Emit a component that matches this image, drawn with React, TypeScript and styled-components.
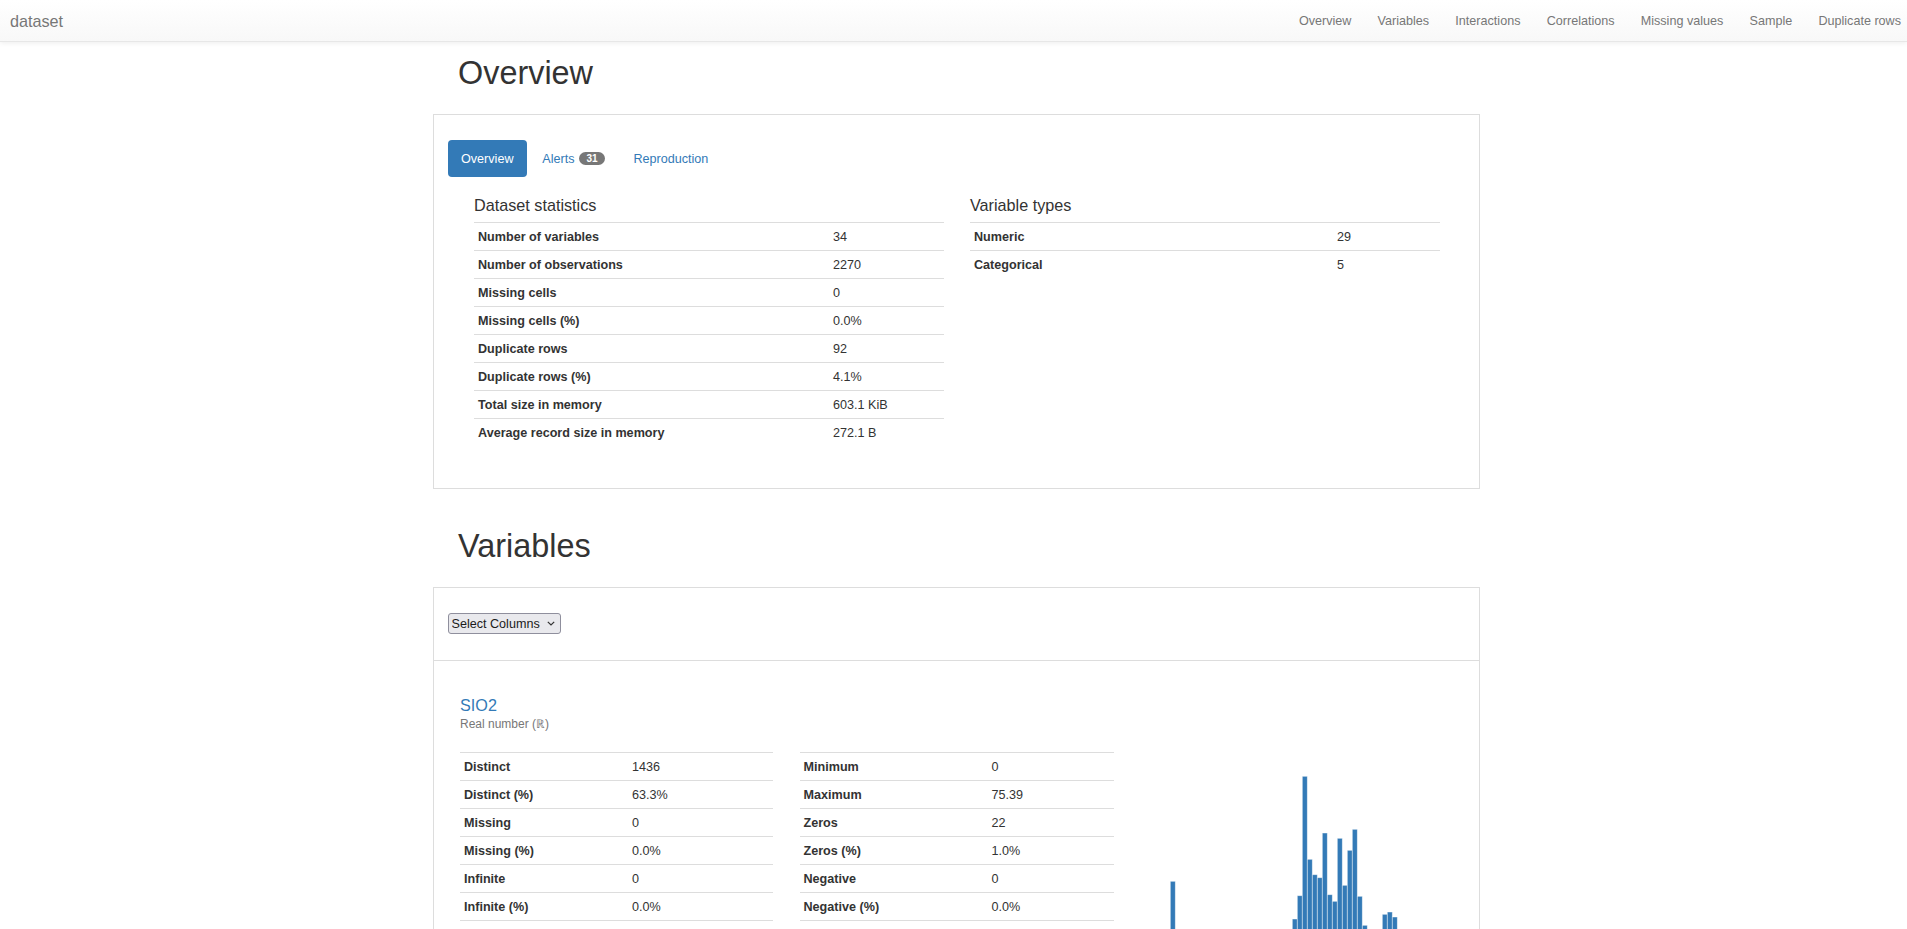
import React from "react";
import styled, { createGlobalStyle } from "styled-components";

const GlobalStyle = createGlobalStyle`
  html, body { margin: 0; padding: 0; background: #fff; }
  body {
    font-family: "Liberation Sans", Arial, Helvetica, sans-serif;
    font-size: 12.6px;
    line-height: 18px;
    color: #333;
  }
  * { box-sizing: border-box; }
`;

const Navbar = styled.nav`
  height: 42px;
  display: flex;
  align-items: center;
  justify-content: space-between;
  padding: 0 6px 0 10px;
  background: linear-gradient(to bottom, #ffffff 0, #f8f8f8 100%);
  border-bottom: 1px solid #e7e7e7;
  box-shadow: inset 0 1px 0 rgba(255, 255, 255, 0.15), 0 1px 5px rgba(0, 0, 0, 0.075);
`;

const Brand = styled.a`
  font-size: 16.2px;
  color: #777;
  text-decoration: none;
`;

const NavLinks = styled.ul`
  display: flex;
  gap: 26.2px;
  list-style: none;
  margin: 0;
  padding: 0;
`;

const NavLink = styled.a`
  color: #777;
  font-size: 12.6px;
  text-decoration: none;
`;

const Main = styled.main`
  width: 1053px;
  margin: 0 auto;
  padding: 14px 0 0 6px;
  display: flex;
  flex-direction: column;
  gap: 39.5px;
`;

const Section = styled.section`
  display: flex;
  flex-direction: column;
`;

const SectionTitle = styled.h1`
  font-size: 32.4px;
  line-height: 1.1;
  font-weight: normal;
  color: #333;
  margin: 0 0 22.4px;
  padding-left: 25px;
`;

const Panel = styled.div`
  border: 1px solid #ddd;
  background: #fff;
`;

const PanelBody = styled.div`
  padding: 25px 13.5px 42.5px;
`;

const Tabs = styled.ul`
  display: flex;
  align-items: center;
  gap: 1.8px;
  list-style: none;
  margin: 0;
  padding: 0;
`;

const Tab = styled.a<{ $active?: boolean }>`
  display: flex;
  align-items: center;
  gap: 5px;
  padding: 9.5px 13.5px 9px;
  line-height: 18px;
  border-radius: 4px;
  font-size: 12.6px;
  text-decoration: none;
  color: ${(p) => (p.$active ? "#fff" : "#337ab7")};
  background: ${(p) => (p.$active ? "#337ab7" : "transparent")};
`;

const Badge = styled.span`
  display: inline-block;
  padding: 1.5px 7px;
  font-size: 10px;
  line-height: 10px;
  font-weight: bold;
  color: #fff;
  background: #777;
  border-radius: 10px;
`;

const TabContent = styled.div`
  display: grid;
  grid-template-columns: 470px 470px;
  column-gap: 26px;
  padding: 19.5px 26.5px 0;
`;

const SubTitle = styled.h4`
  font-size: 16.2px;
  line-height: 1.1;
  font-weight: normal;
  color: #333;
  margin: 1px 0 6.7px;
`;

const Table = styled.div`
  display: flex;
  flex-direction: column;
`;

const Row = styled.div<{ $labelWidth: number }>`
  display: grid;
  grid-template-columns: ${(p) => p.$labelWidth}px 1fr;
  border-top: 1px solid #ddd;
  padding: 5.5px 0 3.5px;
  line-height: 18px;
  font-size: 12.6px;
`;

const Label = styled.span`
  padding: 0 4px;
  font-weight: bold;
  color: #333;
  white-space: nowrap;
`;

const Value = styled.span`
  padding: 0 4px;
  color: #333;
  white-space: nowrap;
`;

const PanelHeader = styled.div`
  padding: 25px 13.5px 26px;
  border-bottom: 1px solid #ddd;
`;

const SelectWrap = styled.span`
  position: relative;
  display: inline-block;
  vertical-align: top;
`;

const Select = styled.select`
  appearance: none;
  -webkit-appearance: none;
  display: block;
  width: 113px;
  height: 21px;
  margin: 0;
  padding: 1px 18px 0 3px;
  border: 1px solid #8f8f9d;
  border-radius: 3px;
  background: #e9e9ed;
  color: #1b1b1b;
  font-family: "Liberation Sans", Arial, sans-serif;
  font-size: 12.6px;
  line-height: 18px;
`;

const Chevron = styled.svg`
  position: absolute;
  right: 6px;
  top: 8.5px;
  pointer-events: none;
`;

const VariableItem = styled.div`
  padding: 36.5px 26px 0;
`;

const VarName = styled.a`
  display: block;
  font-size: 16.2px;
  line-height: 1.1;
  color: #337ab7;
  text-decoration: none;
`;

const VarType = styled.div`
  font-size: 12px;
  line-height: 17px;
  color: #777;
  margin: 1px 0 18.7px;
`;

const StatsGrid = styled.div`
  display: grid;
  grid-template-columns: 313px 314px 300px;
  column-gap: 26.5px;
  align-items: start;
`;

const Chart = styled.svg`
  display: block;
  overflow: visible;
`;

const datasetStats: [string, string][] = [
  ["Number of variables", "34"],
  ["Number of observations", "2270"],
  ["Missing cells", "0"],
  ["Missing cells (%)", "0.0%"],
  ["Duplicate rows", "92"],
  ["Duplicate rows (%)", "4.1%"],
  ["Total size in memory", "603.1 KiB"],
  ["Average record size in memory", "272.1 B"],
];

const varTypes: [string, string][] = [
  ["Numeric", "29"],
  ["Categorical", "5"],
];

const sioLeft: [string, string][] = [
  ["Distinct", "1436"],
  ["Distinct (%)", "63.3%"],
  ["Missing", "0"],
  ["Missing (%)", "0.0%"],
  ["Infinite", "0"],
  ["Infinite (%)", "0.0%"],
  ["Mean", "46.166957"],
];

const sioRight: [string, string][] = [
  ["Minimum", "0"],
  ["Maximum", "75.39"],
  ["Zeros", "22"],
  ["Zeros (%)", "1.0%"],
  ["Negative", "0"],
  ["Negative (%)", "0.0%"],
  ["Memory size", "17.9 KiB"],
];

// [x, top] relative to chart origin
const bars: [number, number][] = [
  [30.3, 129.3],
  [147.3, 185],
  [152.3, 167],
  [157.3, 143.7],
  [162.3, 24.3],
  [167.3, 107.3],
  [172.3, 122.7],
  [177.3, 125.7],
  [182.3, 81],
  [187.3, 142.7],
  [192.3, 149.3],
  [197.3, 86.3],
  [202.3, 133.3],
  [207.3, 98.3],
  [212.3, 77.3],
  [217.3, 144.3],
  [222.3, 173.3],
  [227.3, 186],
  [232.3, 178.3],
  [237.3, 177.3],
  [242.3, 162.3],
  [247.3, 160],
  [252.3, 165],
  [257.3, 190],
];

const CHART_H = 260;

function StatTable({ rows, labelWidth }: { rows: [string, string][]; labelWidth: number }) {
  return (
    <Table>
      {rows.map(([k, v]) => (
        <Row key={k} $labelWidth={labelWidth}>
          <Label>{k}</Label>
          <Value>{v}</Value>
        </Row>
      ))}
    </Table>
  );
}

export default function App() {
  const navItems = [
    "Overview",
    "Variables",
    "Interactions",
    "Correlations",
    "Missing values",
    "Sample",
    "Duplicate rows",
  ];
  return (
    <>
      <GlobalStyle />
      <Navbar>
        <Brand href="#">dataset</Brand>
        <NavLinks>
          {navItems.map((n) => (
            <li key={n}>
              <NavLink href="#">{n}</NavLink>
            </li>
          ))}
        </NavLinks>
      </Navbar>
      <Main>
        <Section>
          <SectionTitle>Overview</SectionTitle>
          <Panel>
            <PanelBody>
              <Tabs>
                <li>
                  <Tab $active href="#">
                    Overview
                  </Tab>
                </li>
                <li>
                  <Tab href="#">
                    Alerts <Badge>31</Badge>
                  </Tab>
                </li>
                <li>
                  <Tab href="#">Reproduction</Tab>
                </li>
              </Tabs>
              <TabContent>
                <div>
                  <SubTitle>Dataset statistics</SubTitle>
                  <StatTable rows={datasetStats} labelWidth={355} />
                </div>
                <div>
                  <SubTitle>Variable types</SubTitle>
                  <StatTable rows={varTypes} labelWidth={363} />
                </div>
              </TabContent>
            </PanelBody>
          </Panel>
        </Section>
        <Section>
          <SectionTitle>Variables</SectionTitle>
          <Panel>
            <PanelHeader>
              <SelectWrap>
                <Select defaultValue="sel">
                  <option value="sel">Select Columns</option>
                </Select>
                <Chevron width="8" height="5" viewBox="0 0 8 5">
                  <path d="M0.8 0.8 L4 4 L7.2 0.8" fill="none" stroke="#333" strokeWidth="1.2" />
                </Chevron>
              </SelectWrap>
            </PanelHeader>
            <VariableItem>
              <VarName href="#">SIO2</VarName>
              <VarType>Real number (ℝ)</VarType>
              <StatsGrid>
                <StatTable rows={sioLeft} labelWidth={168} />
                <StatTable rows={sioRight} labelWidth={188} />
                <Chart width="300" height={CHART_H} viewBox={`0 0 300 ${CHART_H}`}>
                  {bars.map(([x, top], i) => (
                    <rect
                      key={i}
                      x={x}
                      y={top}
                      width={5}
                      height={CHART_H - top}
                      fill="#337ab7"
                      stroke="rgba(255,255,255,0.55)"
                      strokeWidth={0.8}
                    />
                  ))}
                </Chart>
              </StatsGrid>
            </VariableItem>
          </Panel>
        </Section>
      </Main>
    </>
  );
}
